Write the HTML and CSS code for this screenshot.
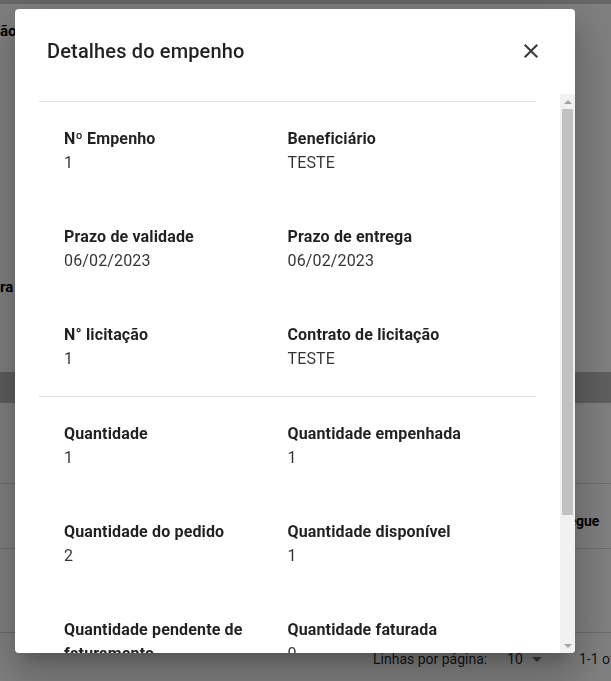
FILE: index.html
```html
<!DOCTYPE html>
<html lang="pt-BR">
<head>
<meta charset="utf-8">
<title>Detalhes do empenho</title>
<link rel="stylesheet" href="styles.css">
</head>
<body>
<div class="page">
  <div class="topbar"></div>
  <section class="card filters">
    <div class="field f1">ão</div>
    <div class="field f2">ra</div>
  </section>
  <section class="card table">
    <div class="toolbar"></div>
    <div class="thead"><span class="th">Entregue</span></div>
    <div class="trow"></div>
    <div class="pagination">
      <span class="pg-label">Linhas por página:</span>
      <span class="pg-select">10<svg class="caret" viewBox="0 0 24 24"><path d="M7 10l5 5 5-5z"/></svg></span>
      <span class="pg-range">1-1 of 1</span>
    </div>
  </section>
</div>

<div class="backdrop">
  <div class="dialog" role="dialog" aria-labelledby="dlg-title">
    <header class="dialog-title">
      <h2 id="dlg-title">Detalhes do empenho</h2>
      <button class="close" aria-label="Fechar">
        <svg viewBox="0 0 24 24"><path d="M19 6.41 17.59 5 12 10.59 6.41 5 5 6.41 10.59 12 5 17.59 6.41 19 12 13.41 17.59 19 19 17.59 13.41 12z"/></svg>
      </button>
    </header>
    <div class="dialog-body">
      <div class="dialog-content">
        <hr class="divider first">
        <div class="details">
          <div class="item"><div class="label">Nº Empenho</div><div class="value">1</div></div>
          <div class="item"><div class="label">Beneficiário</div><div class="value">TESTE</div></div>
          <div class="item"><div class="label">Prazo de validade</div><div class="value">06/02/2023</div></div>
          <div class="item"><div class="label">Prazo de entrega</div><div class="value">06/02/2023</div></div>
          <div class="item"><div class="label">N° licitação</div><div class="value">1</div></div>
          <div class="item"><div class="label">Contrato de licitação</div><div class="value">TESTE</div></div>
        </div>
        <hr class="divider">
        <div class="details last">
          <div class="item"><div class="label">Quantidade</div><div class="value">1</div></div>
          <div class="item"><div class="label">Quantidade empenhada</div><div class="value">1</div></div>
          <div class="item"><div class="label">Quantidade do pedido</div><div class="value">2</div></div>
          <div class="item"><div class="label">Quantidade disponível</div><div class="value">1</div></div>
          <div class="item"><div class="label">Quantidade pendente de faturamento</div><div class="value">1</div></div>
          <div class="item"><div class="label">Quantidade faturada</div><div class="value">0</div></div>
        </div>
      </div>
      <div class="scrollbar" aria-hidden="true">
        <span class="sb-btn"><span class="tri up"></span></span>
        <div class="sb-track"><div class="sb-thumb"></div></div>
        <span class="sb-btn"><span class="tri down"></span></span>
      </div>
    </div>
  </div>
</div>
</body>
</html>
```

FILE: styles.css
```css
* { box-sizing: border-box; }

html, body {
  margin: 0;
  height: 100%;
}

body {
  font-family: Roboto, "Noto Sans", sans-serif;
  overflow: hidden;
  background: #bcbcbc;
  color: rgba(0, 0, 0, 0.87);
}

/* ---------- underlying page ---------- */
.page {
  width: 720px;
  min-height: 100%;
  background: #bcbcbc;
}

.topbar {
  height: 4px;
  background: #cecece;
}

.card { background: #fff; }

.filters {
  height: 368px;
  display: flex;
  flex-direction: column;
}

.field {
  font-size: 15px;
  line-height: 20px;
  font-weight: 700;
  color: #000;
}

.f1 { margin-top: 17px; }
.f2 { margin-top: 236px; }

.table { margin-top: 31px; }

.toolbar {
  height: 81px;
  border-bottom: 1px solid #d6d6d6;
}

.thead {
  height: 65px;
  border-bottom: 1px solid #d6d6d6;
  padding: 27px 0 0 543px;
  font-size: 14px;
  line-height: 20px;
  font-weight: 700;
  color: #000;
}

.trow {
  height: 84px;
  border-bottom: 1px solid #d6d6d6;
}

.pagination {
  height: 52px;
  display: flex;
  align-items: center;
  padding-left: 373px;
  font-size: 14px;
  line-height: 20px;
  color: rgba(0, 0, 0, 0.87);
}

.pg-select {
  display: flex;
  align-items: center;
  margin-left: 20px;
}

.caret {
  width: 24px;
  height: 24px;
  fill: rgba(0, 0, 0, 0.54);
  margin-left: 2px;
}

.pg-range { margin-left: 30px; }

/* ---------- modal ---------- */
.backdrop {
  position: fixed;
  inset: 0;
  background: rgba(0, 0, 0, 0.5);
  padding: 9px 0 0 15px;
}

.dialog {
  width: 560px;
  height: 644px;
  background: #fff;
  border-radius: 4px;
  display: flex;
  flex-direction: column;
  overflow: hidden;
  box-shadow:
    0 11px 15px -7px rgba(0, 0, 0, 0.2),
    0 24px 38px 3px rgba(0, 0, 0, 0.14),
    0 9px 46px 8px rgba(0, 0, 0, 0.12);
}

.dialog-title {
  display: flex;
  align-items: center;
  justify-content: space-between;
  height: 85px;
  padding: 26px 24px 27px 32px;
  flex: none;
}

.dialog-title h2 {
  margin: 0;
  font-size: 20px;
  line-height: 32px;
  font-weight: 500;
  letter-spacing: 0.15px;
  color: rgba(0, 0, 0, 0.87);
}

.close {
  width: 40px;
  height: 40px;
  margin: -4px 0;
  padding: 8px;
  border: 0;
  border-radius: 50%;
  background: none;
  display: flex;
  align-items: center;
  justify-content: center;
  cursor: pointer;
}

.close svg {
  width: 24px;
  height: 24px;
  fill: rgba(0, 0, 0, 0.78);
}

.dialog-body {
  flex: 1;
  min-height: 0;
  display: flex;
}

.dialog-content {
  flex: 1;
  min-width: 0;
  overflow: hidden;
  padding: 0 24px;
}

/* drawn classic scrollbar */
.scrollbar {
  width: 15px;
  flex: none;
  display: flex;
  flex-direction: column;
  background: #f1f1f1;
}

.sb-btn {
  height: 15px;
  flex: none;
  display: flex;
  align-items: center;
  justify-content: center;
}

.tri {
  width: 0;
  height: 0;
  border-left: 4px solid transparent;
  border-right: 4px solid transparent;
}

.tri.up { border-bottom: 4px solid #a3a3a3; }
.tri.down { border-top: 4px solid #a3a3a3; }

.sb-track {
  flex: 1;
  padding: 0 2px;
}

.sb-thumb {
  height: 406px;
  background: #c1c1c1;
}

.divider {
  border: 0;
  margin: 0;
  height: 1px;
  background: #e0e0e0;
}

.divider.first { margin-top: 7px; }

.details {
  display: grid;
  grid-template-columns: 1fr 1fr;
  row-gap: 50px;
  padding: 25px 25px 25px;
}

.details.last { padding-bottom: 132px; }

.label {
  font-size: 16px;
  line-height: 24px;
  font-weight: 700;
  letter-spacing: 0.15px;
  color: rgba(0, 0, 0, 0.87);
}

.value {
  font-size: 16px;
  line-height: 24px;
  font-weight: 400;
  letter-spacing: 0.15px;
  color: rgba(0, 0, 0, 0.8);
}
```
